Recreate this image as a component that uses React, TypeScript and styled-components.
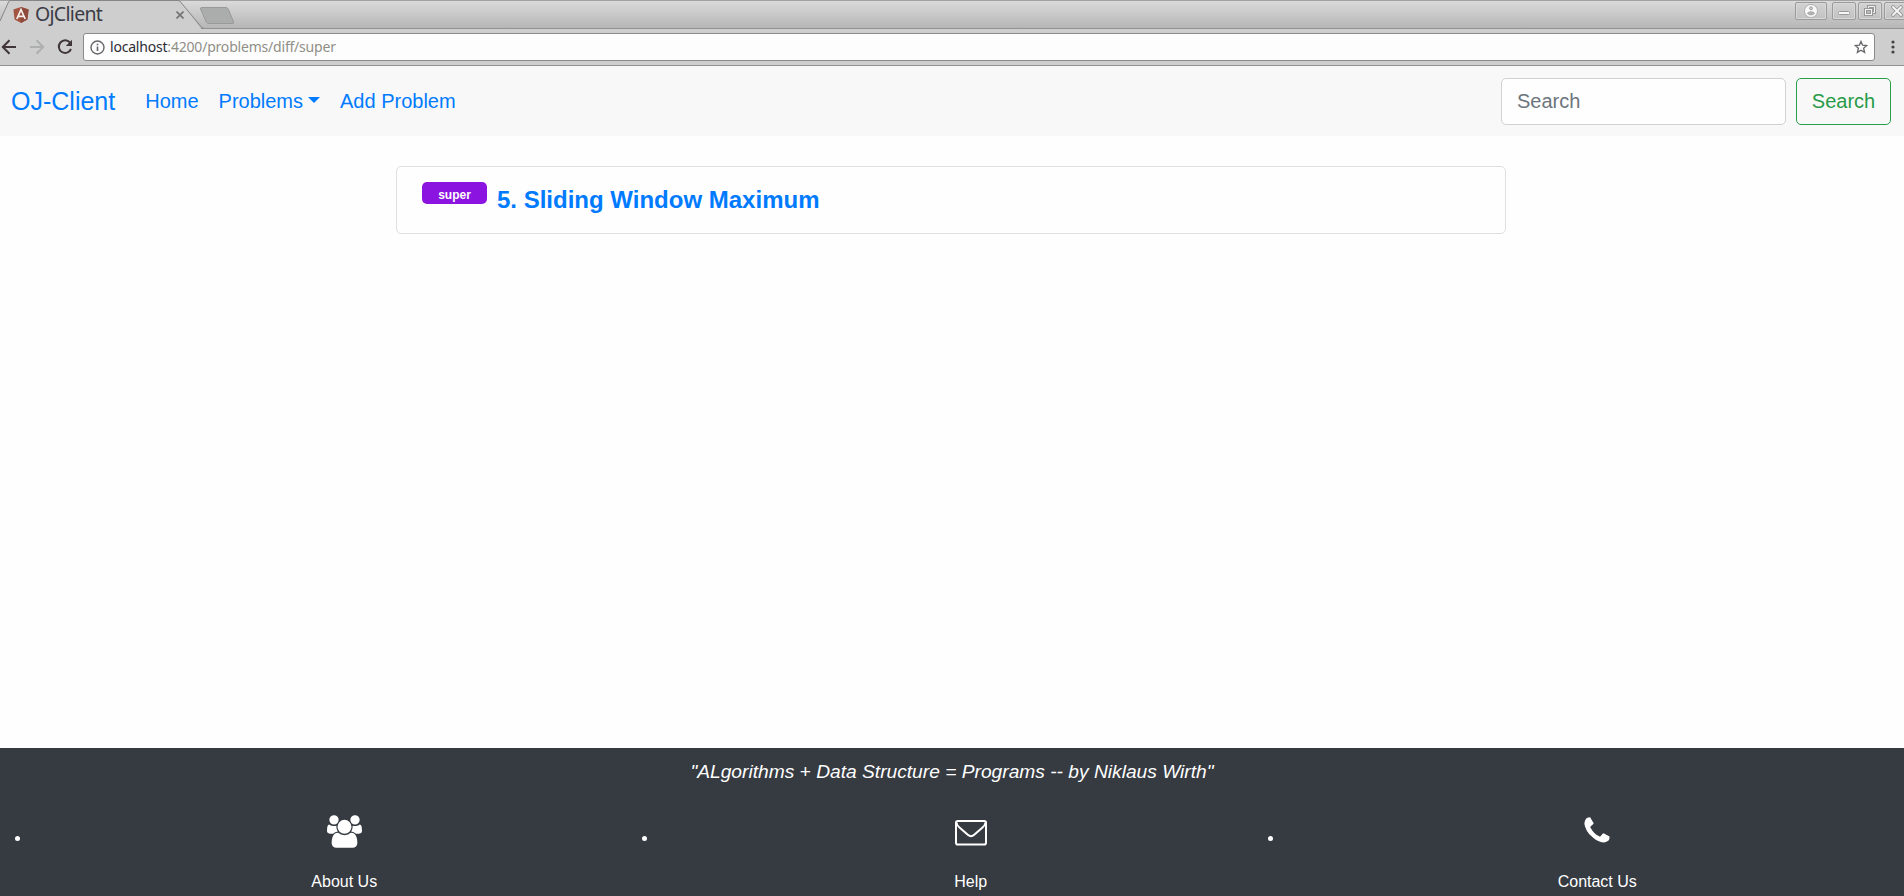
import React from "react";
import styled, { createGlobalStyle } from "styled-components";

const GlobalStyle = createGlobalStyle`
  *, *::before, *::after { box-sizing: border-box; }
  html, body { margin: 0; overflow: hidden; }
  body {
    background: #fefefe;
    font-family: "Liberation Sans", Arial, sans-serif;
    font-size: 20px;
    line-height: 1.5;
    color: #212529;
  }
`;

const Page = styled.div`
  display: flex;
  flex-direction: column;
  height: 896px;
  width: 1904px;
  overflow: hidden;
`;

/* Browser frame */
const TabStrip = styled.div`
  display: flex;
  height: 29px;
  border-top: 1px solid #a3a3a3;
  border-bottom: 1px solid #939393;
  background: linear-gradient(#dadada, #b6b6b6);
`;

const Tab = styled.div`
  position: relative;
  display: flex;
  align-items: center;
  width: 204px;
  height: 28px;
  margin-top: -1px;
  padding: 0 17px 0 13px;
  flex: none;
`;

const TabShape = styled.svg`
  position: absolute;
  left: 0;
  top: 0;
  z-index: 0;
`;

const TabLogo = styled.svg`
  position: relative;
  margin-top: 1px;
  flex: none;
`;

const TabTitle = styled.span`
  position: relative;
  margin-left: 6px;
  font: 19.5px/28px "Noto Sans", sans-serif;
  letter-spacing: -0.7px;
  color: #3b3b46;
  flex: 1;
`;

const TabClose = styled.svg`
  position: relative;
  margin: 2px 3px 0 0;
`;

const NewTab = styled.svg`
  margin: 5px 0 0 -5px;
  position: relative;
`;

const WindowControls = styled.div`
  display: flex;
  gap: 2px;
  margin: 1px -6px 0 auto;
`;

const ControlButton = styled.div<{ $width: number; $gap?: number }>`
  display: flex;
  align-items: center;
  justify-content: center;
  width: ${(p) => p.$width}px;
  height: 18px;
  margin-right: ${(p) => p.$gap ?? 0}px;
  border: 1px solid #9b9b9b;
  border-radius: 2px;
  background: linear-gradient(#d2d2d2, #c2c2c2);
  box-shadow: inset 0 0 0 1px #d8d8d8;
`;

const Toolbar = styled.div`
  display: flex;
  align-items: center;
  height: 37px;
  background: #cdcecd;
  border-bottom: 1px solid #919191;
  flex: none;
`;

const ToolbarIcon = styled.svg<{ $left: number }>`
  margin-left: ${(p) => p.$left}px;
  flex: none;
`;

const AddressBar = styled.div`
  display: flex;
  align-items: center;
  width: 1792px;
  height: 28px;
  margin-left: 10px;
  padding: 0 6px;
  background: #fdfdfd;
  border: 1px solid #8b8b8b;
  border-radius: 3px;
`;

const Url = styled.span`
  flex: 1;
  margin-left: 5px;
  font: 14px/26px "Noto Sans", sans-serif;
  letter-spacing: -0.2px;
  color: #908f87;
  b { font-weight: 400; color: #2b2b33; }
`;

/* Application */
const Navbar = styled.nav`
  display: flex;
  align-items: center;
  height: 70px;
  padding: 0 13px 0 11px;
  background: #f8f8f8;
  flex: none;
`;

const Brand = styled.a`
  color: #007bff;
  font-size: 25px;
  margin: 1px 30px 0 0;
`;

const NavLink = styled.a<{ $caret?: boolean }>`
  display: flex;
  align-items: center;
  color: #007bff;
  margin-right: 20px;
  ${(p) =>
    p.$caret &&
    `&::after {
      content: "";
      margin: 0 0 3px 5px;
      border-top: 6px solid;
      border-left: 6px solid transparent;
      border-right: 6px solid transparent;
    }`}
`;

const SearchForm = styled.div`
  display: flex;
  gap: 10px;
  margin-left: auto;
`;

const SearchInput = styled.input`
  width: 285px;
  height: 47px;
  padding: 0 15px;
  border: 1px solid #d0d1d2;
  border-radius: 5px;
  background: #fefefe;
  font: inherit;
  &::placeholder { color: #6c757d; opacity: 1; }
`;

const SearchButton = styled.button`
  width: 95px;
  height: 47px;
  padding: 0;
  border: 1px solid #289f49;
  border-radius: 5px;
  background: transparent;
  color: #289b48;
  font: inherit;
`;

const Main = styled.main`
  flex: 1;
  padding: 30px 0 0 396px;
`;

const ProblemCard = styled.article`
  display: flex;
  align-items: flex-start;
  width: 1110px;
  height: 68px;
  padding: 15px 25px;
  border: 1px solid #dfdfdf;
  border-radius: 5px;
`;

const Difficulty = styled.span`
  width: 65px;
  height: 22px;
  border-radius: 5px;
  background: #8c14e0;
  color: #fff;
  font-size: 12px;
  font-weight: 700;
  line-height: 26px;
  text-align: center;
`;

const ProblemTitle = styled.strong`
  margin-left: 10px;
  color: #007bff;
  font-size: 24px;
  line-height: 36px;
`;

const Footer = styled.footer`
  height: 148px;
  background: #363a41;
  color: #fff;
  flex: none;
`;

const Quote = styled.p`
  margin: 0;
  padding-top: 9px;
  font-size: 19.2px;
  font-style: italic;
  line-height: 30px;
  text-align: center;
`;

const FooterLinks = styled.ul`
  display: flex;
  margin: 23px 0 0 15px;
  padding: 0;
  list-style: none;
`;

const FooterItem = styled.li`
  display: flex;
  align-items: center;
  width: 626.5px;
  flex: none;
  &::before {
    content: "";
    width: 5px;
    height: 5px;
    margin: 0 27px 27px 0;
    border-radius: 50%;
    background: #fff;
  }
`;

const FooterLink = styled.a`
  display: flex;
  flex: 1;
  flex-direction: column;
  align-items: center;
  font-size: 16px;
  line-height: 24px;
`;

const IconSlot = styled.span`
  display: flex;
  height: 60px;
  padding-top: 5px;
  align-items: flex-start;
`;

const UsersIcon = () => (
  <svg width="35" height="33" viewBox="-64 0 1920 1792" fill="currentColor">
    <path d="M529 896q-162 5-265 128h-134q-82 0-138-40.500t-56-118.500q0-353 124-353 6 0 43.500 21t97.500 42.500 119 21.500q67 0 133-23-5 37-5 66 0 139 81 256zm1071 637q0 120-73 189.500t-194 69.500h-874q-121 0-194-69.500t-73-189.500q0-53 3.500-103.500t14-109 26.500-108.500 43-97.500 62-81 85.500-53.500 111.500-20q10 0 43 21.500t73 48 107 48 135 21.500 135-21.500 107-48 73-48 43-21.500q61 0 111.500 20t85.500 53.500 62 81 43 97.500 26.500 108.500 14 109 3.500 103.500zm-1024-1277q0 106-75 181t-181 75-181-75-75-181 75-181 181-75 181 75 75 181zm704 384q0 159-112.500 271.500t-271.500 112.500-271.500-112.500-112.500-271.500 112.500-271.500 271.500-112.500 271.500 112.500 112.500 271.500zm576 225q0 78-56 118.500t-138 40.500h-134q-103-123-265-128 81-117 81-256 0-29-5-66 66 23 133 23 59 0 119-21.500t97.500-42.500 43.500-21q124 0 124 353zm-128-609q0 106-75 181t-181 75-181-75-75-181 75-181 181-75 181 75 75 181z" />
  </svg>
);

const EnvelopeIcon = () => (
  <svg width="32" height="32" viewBox="0 0 32 32" fill="none" stroke="currentColor">
    <rect x="1" y="6" width="30" height="23.500" rx="1.800" strokeWidth="2" />
    <path d="M1.500 7.500C1.500 9.500 2.800 11 4.500 12.400L12.800 19.800Q16 22.600 19.200 19.800L27.500 12.400C29.200 11 30.500 9.500 30.500 7.500" strokeWidth="2" />
  </svg>
);

const PhoneIcon = () => (
  <svg width="32" height="32" viewBox="0 0 1792 1792" fill="currentColor">
    <path d="M1600 1240q0 27-10 70.500t-21 68.500q-21 50-122 106-94 51-186 51-27 0-53-3.500t-57.500-12.500-47-14.500-55.500-20.500-49-18q-98-35-175-83-127-79-264-216t-216-264q-48-77-83-175-3-9-18-49t-20.500-55.500-14.500-47-12.500-57.500-3.500-53q0-92 51-186 56-101 106-122 25-11 68.500-21t70.500-10q14 0 21 3 18 6 53 76 11 19 30 54t35 63.500 31 53.500q3 4 17.500 25t21.500 35.500 7 28.500q0 20-28.500 50t-62 55-62 53-28.500 46q0 9 5 22.500t8.500 20.500 14 24 11.500 19q76 137 174 235t235 174q2 1 19 11.500t24 14 20.500 8.500 22.500 5q18 0 46-28.500t53-62 55-62 50-28.500q14 0 28.500 7t35.500 21.500 25 17.500q25 15 53.500 31t63.500 35 54 30q70 35 76 53 3 7 3 21z" />
  </svg>
);

const links = [
  { label: "About Us", Icon: UsersIcon },
  { label: "Help", Icon: EnvelopeIcon },
  { label: "Contact Us", Icon: PhoneIcon },
];

const BrowserFrame = () => (
  <>
    <TabStrip>
      <Tab>
        <TabShape width="204" height="29">
          <path d="M0 21L8.500 2Q9 .5 11 .5H178Q180 .5 181 2.500L201 28.500V29H0Z" fill="#cdcecd" />
          <path d="M0 21L8.500 2Q9 .5 11 .5H178Q180 .5 181 2.500L200.500 26Q202 28.500 204 28.500" fill="none" stroke="#858585" />
        </TabShape>
        <TabLogo width="16" height="16" viewBox="0 0 16 16">
          <path d="M8 0L15.600 2.600L14.400 12.500L8 16L1.600 12.500L.4 2.600Z" fill="#a35440" />
          <path d="M8 0L15.600 2.600L14.400 12.500L8 16Z" fill="#8f4a3c" />
          <path d="M3.800 12L8 2.600L12.200 12M5.400 9.300H10.600" stroke="#f4efed" strokeWidth="1.700" fill="none" />
        </TabLogo>
        <TabTitle>OjClient</TabTitle>
        <TabClose width="8" height="8" viewBox="0 0 8 8">
          <path d="M.5 .5L7.500 7.500M7.500 .5L.5 7.500" stroke="#737373" strokeWidth="1.600" />
        </TabClose>
      </Tab>
      <NewTab width="36" height="20">
        <path d="M3 1.500H27Q28.500 1.500 29.500 3.500L34.500 16Q35 17.500 33 17.500H10Q8 17.500 7 15.500L1.500 3Q1 1.500 3 1.500Z" fill="#abadac" stroke="#999" />
      </NewTab>
      <WindowControls>
        <ControlButton $width={32} $gap={3}>
          <svg width="14" height="14" viewBox="0 0 14 14">
            <circle cx="7" cy="7" r="6.500" fill="#fafafa" stroke="#a3a3a3" strokeWidth=".8" />
            <circle cx="7" cy="4.300" r="1.500" fill="#ccc" stroke="#9a9a9a" strokeWidth=".9" />
            <path d="M3.500 9.500C3.800 7.300 10.200 7.300 10.500 9.500C9.300 11.400 4.700 11.400 3.500 9.500Z" fill="#b5b5b5" stroke="#9a9a9a" strokeWidth=".7" />
          </svg>
        </ControlButton>
        <ControlButton $width={24}>
          <svg width="12" height="12">
            <rect x=".5" y="6.500" width="11" height="3" rx="1" fill="#f6f6f6" stroke="#999" />
          </svg>
        </ControlButton>
        <ControlButton $width={24}>
          <svg width="12" height="12" fill="none">
            <path d="M4.500 1.500H10.500V7.500H4.500Z" stroke="#999" strokeWidth="3" />
            <path d="M4.500 1.500H10.500V7.500H4.500Z" stroke="#f4f4f4" />
            <rect x="1.500" y="4.500" width="6" height="5" fill="#bbb" stroke="#999" strokeWidth="3" />
            <rect x="1.500" y="4.500" width="6" height="5" stroke="#f4f4f4" />
          </svg>
        </ControlButton>
        <ControlButton $width={26}>
          <svg width="12" height="12" fill="none" strokeLinecap="round">
            <path d="M2 2L10 10M10 2L2 10" stroke="#949494" strokeWidth="3.600" />
            <path d="M2 2L10 10M10 2L2 10" stroke="#f6f6f6" strokeWidth="1.800" />
          </svg>
        </ControlButton>
      </WindowControls>
    </TabStrip>
    <Toolbar>
      <ToolbarIcon $left={1} width="16" height="16" viewBox="0 0 16 16" fill="none" stroke="#40363a" strokeWidth="2">
        <path d="M15 8H2M8.500 1.300L1.800 8L8.500 14.700" />
      </ToolbarIcon>
      <ToolbarIcon $left={13} width="15" height="16" viewBox="0 0 15 16" fill="none" stroke="#aeb0af" strokeWidth="2">
        <path d="M0 8H13M6.500 1.300L13.200 8L6.500 14.700" />
      </ToolbarIcon>
      <ToolbarIcon $left={12} width="16" height="16" viewBox="0 0 16 16">
        <path d="M13 3.600A6.300 6.300 0 1 0 14 10" fill="none" stroke="#40363a" strokeWidth="2" />
        <path d="M15 .8V7H8.800Z" fill="#40363a" />
      </ToolbarIcon>
      <AddressBar>
        <svg width="15" height="15" viewBox="0 0 15 15">
          <circle cx="7.500" cy="7.500" r="6.500" fill="none" stroke="#66666a" strokeWidth="1.400" />
          <path d="M7.500 6.500V11M7.500 3.700V5.300" stroke="#66666a" strokeWidth="1.600" />
        </svg>
        <Url><b>localhost</b>:4200/problems/diff/super</Url>
        <svg width="14" height="14" viewBox="0 0 14 14">
          <path d="M7 1.400L8.600 5.200L12.800 5.500L9.600 8.200L10.600 12.400L7 10.200L3.400 12.400L4.400 8.200L1.200 5.500L5.400 5.200Z" fill="none" stroke="#66666a" strokeWidth="1.300" />
        </svg>
      </AddressBar>
      <ToolbarIcon $left={16} width="4" height="14" fill="#434343">
        <circle cx="2" cy="2" r="1.600" />
        <circle cx="2" cy="7" r="1.600" />
        <circle cx="2" cy="12" r="1.600" />
      </ToolbarIcon>
    </Toolbar>
  </>
);

export default function App() {
  return (
    <Page>
      <GlobalStyle />
      <BrowserFrame />
      <Navbar>
        <Brand>OJ-Client</Brand>
        <NavLink>Home</NavLink>
        <NavLink $caret>Problems</NavLink>
        <NavLink>Add Problem</NavLink>
        <SearchForm>
          <SearchInput placeholder="Search" />
          <SearchButton>Search</SearchButton>
        </SearchForm>
      </Navbar>
      <Main>
        <ProblemCard>
          <Difficulty>super</Difficulty>
          <ProblemTitle>5. Sliding Window Maximum</ProblemTitle>
        </ProblemCard>
      </Main>
      <Footer>
        <Quote>"ALgorithms + Data Structure = Programs -- by Niklaus Wirth"</Quote>
        <FooterLinks>
          {links.map(({ label, Icon }) => (
            <FooterItem key={label}>
              <FooterLink>
                <IconSlot>
                  <Icon />
                </IconSlot>
                {label}
              </FooterLink>
            </FooterItem>
          ))}
        </FooterLinks>
      </Footer>
    </Page>
  );
}
